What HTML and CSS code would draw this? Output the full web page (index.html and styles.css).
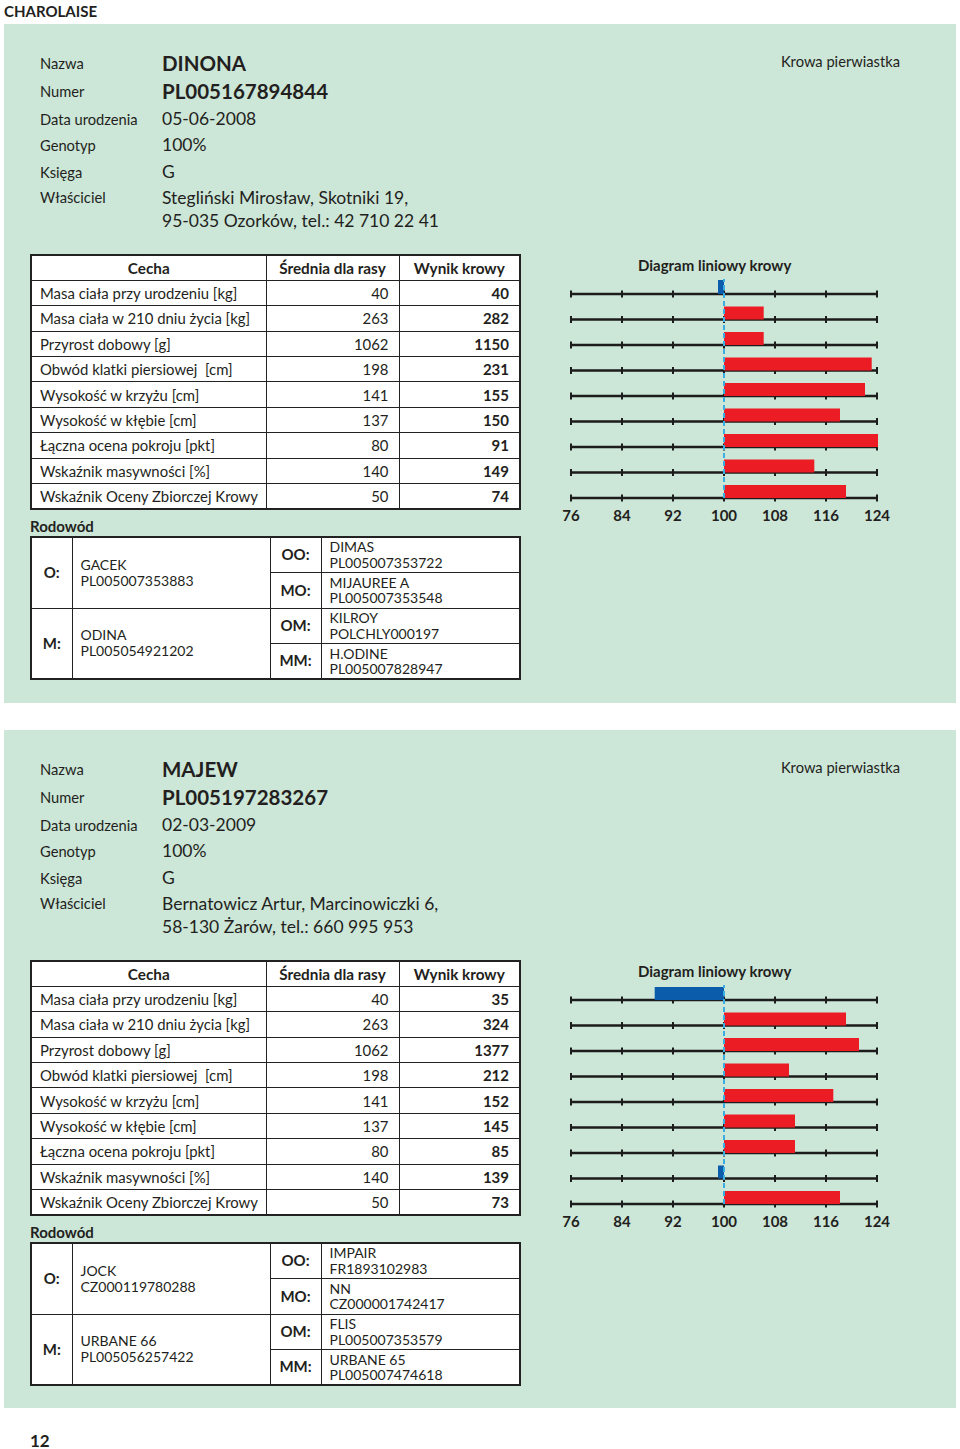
FILE: index.html
```html
<!DOCTYPE html>
<html lang="pl">
<head>
<meta charset="utf-8">
<title>Charolaise</title>
<link rel="stylesheet" href="styles.css">
</head>
<body>
<h1 class="breed">CHAROLAISE</h1>

<section class="panel">
  <div class="top">
    <div class="info">
      <span class="k">Nazwa</span><span class="v big">DINONA</span>
      <span class="k">Numer</span><span class="v big">PL005167894844</span>
      <span class="k">Data urodzenia</span><span class="v">05-06-2008</span>
      <span class="k">Genotyp</span><span class="v">100%</span>
      <span class="k">Księga</span><span class="v">G</span>
      <span class="k owner">Właściciel</span><span class="v owner">Stegliński Mirosław, Skotniki 19,<br>95-035 Ozorków, tel.: 42 710 22 41</span>
    </div>
    <div class="kind">Krowa pierwiastka</div>
  </div>
  <div class="main">
    <div class="left">
      <table class="traits">
        <colgroup><col class="c1"><col class="c2"><col class="c3"></colgroup>
        <tr><th>Cecha</th><th>Średnia dla rasy</th><th>Wynik krowy</th></tr>
        <tr><td>Masa ciała przy urodzeniu [kg]</td><td class="n">40</td><td class="n b">40</td></tr>
        <tr><td>Masa ciała w 210 dniu życia [kg]</td><td class="n">263</td><td class="n b">282</td></tr>
        <tr><td>Przyrost dobowy [g]</td><td class="n">1062</td><td class="n b">1150</td></tr>
        <tr><td>Obwód klatki piersiowej&nbsp; [cm]</td><td class="n">198</td><td class="n b">231</td></tr>
        <tr><td>Wysokość w krzyżu [cm]</td><td class="n">141</td><td class="n b">155</td></tr>
        <tr><td>Wysokość w kłębie [cm]</td><td class="n">137</td><td class="n b">150</td></tr>
        <tr><td>Łączna ocena pokroju [pkt]</td><td class="n">80</td><td class="n b">91</td></tr>
        <tr><td>Wskaźnik masywności [%]</td><td class="n">140</td><td class="n b">149</td></tr>
        <tr><td>Wskaźnik Oceny Zbiorczej Krowy</td><td class="n">50</td><td class="n b">74</td></tr>
      </table>
      <div class="rod-title">Rodowód</div>
      <table class="pedigree">
        <colgroup><col class="p1"><col class="p2"><col class="p3"><col class="p4"></colgroup>
        <tr><th rowspan="2">O:</th><td rowspan="2" class="parent">GACEK<br>PL005007353883</td><th>OO:</th><td>DIMAS<br>PL005007353722</td></tr>
        <tr><th>MO:</th><td>MIJAUREE A<br>PL005007353548</td></tr>
        <tr><th rowspan="2">M:</th><td rowspan="2" class="parent">ODINA<br>PL005054921202</td><th>OM:</th><td>KILROY<br>POLCHLY000197</td></tr>
        <tr><th>MM:</th><td>H.ODINE<br>PL005007828947</td></tr>
      </table>
    </div>
    <div class="chart">
      <div class="chart-title">Diagram liniowy krowy</div>
      <svg class="bars" width="356" height="229" viewBox="0 0 356 229">
        <defs>
          <g id="axis">
            <line x1="25" y1="0" x2="331" y2="0" stroke="#1c1c1c" stroke-width="2.4"/>
            <path d="M25 -3.5V3.5M76 -3.5V3.5M127 -3.5V3.5M178 -3.5V3.5M229 -3.5V3.5M280 -3.5V3.5M331 -3.5V3.5" stroke="#1c1c1c" stroke-width="2"/>
          </g>
        </defs>
        <use href="#axis" y="15"/>
        <use href="#axis" y="40.5"/>
        <use href="#axis" y="66"/>
        <use href="#axis" y="91.5"/>
        <use href="#axis" y="117"/>
        <use href="#axis" y="142.5"/>
        <use href="#axis" y="168"/>
        <use href="#axis" y="193.5"/>
        <use href="#axis" y="219"/>
        <rect class="neg" x="172" y="1" width="6" height="14"/>
        <rect class="pos" x="178" y="27.5" width="39.7" height="13"/>
        <rect class="pos" x="178" y="53" width="39.7" height="13"/>
        <rect class="pos" x="178" y="78.5" width="147.7" height="13"/>
        <rect class="pos" x="178" y="104" width="141" height="13"/>
        <rect class="pos" x="178" y="129.5" width="116" height="13"/>
        <rect class="pos" x="178" y="155" width="154" height="13"/>
        <rect class="pos" x="178" y="180.5" width="90.3" height="13"/>
        <rect class="pos" x="178" y="206" width="122" height="13"/>
        <line x1="178" y1="-2" x2="178" y2="220" stroke="#3aaee3" stroke-width="2" stroke-dasharray="5 3"/>
      </svg>
      <div class="ticks"><span>76</span><span>84</span><span>92</span><span>100</span><span>108</span><span>116</span><span>124</span></div>
    </div>
  </div>
</section>

<section class="panel second">
  <div class="top">
    <div class="info">
      <span class="k">Nazwa</span><span class="v big">MAJEW</span>
      <span class="k">Numer</span><span class="v big">PL005197283267</span>
      <span class="k">Data urodzenia</span><span class="v">02-03-2009</span>
      <span class="k">Genotyp</span><span class="v">100%</span>
      <span class="k">Księga</span><span class="v">G</span>
      <span class="k owner">Właściciel</span><span class="v owner">Bernatowicz Artur, Marcinowiczki 6,<br>58-130 Żarów, tel.: 660 995 953</span>
    </div>
    <div class="kind">Krowa pierwiastka</div>
  </div>
  <div class="main">
    <div class="left">
      <table class="traits">
        <colgroup><col class="c1"><col class="c2"><col class="c3"></colgroup>
        <tr><th>Cecha</th><th>Średnia dla rasy</th><th>Wynik krowy</th></tr>
        <tr><td>Masa ciała przy urodzeniu [kg]</td><td class="n">40</td><td class="n b">35</td></tr>
        <tr><td>Masa ciała w 210 dniu życia [kg]</td><td class="n">263</td><td class="n b">324</td></tr>
        <tr><td>Przyrost dobowy [g]</td><td class="n">1062</td><td class="n b">1377</td></tr>
        <tr><td>Obwód klatki piersiowej&nbsp; [cm]</td><td class="n">198</td><td class="n b">212</td></tr>
        <tr><td>Wysokość w krzyżu [cm]</td><td class="n">141</td><td class="n b">152</td></tr>
        <tr><td>Wysokość w kłębie [cm]</td><td class="n">137</td><td class="n b">145</td></tr>
        <tr><td>Łączna ocena pokroju [pkt]</td><td class="n">80</td><td class="n b">85</td></tr>
        <tr><td>Wskaźnik masywności [%]</td><td class="n">140</td><td class="n b">139</td></tr>
        <tr><td>Wskaźnik Oceny Zbiorczej Krowy</td><td class="n">50</td><td class="n b">73</td></tr>
      </table>
      <div class="rod-title">Rodowód</div>
      <table class="pedigree">
        <colgroup><col class="p1"><col class="p2"><col class="p3"><col class="p4"></colgroup>
        <tr><th rowspan="2">O:</th><td rowspan="2" class="parent">JOCK<br>CZ000119780288</td><th>OO:</th><td>IMPAIR<br>FR1893102983</td></tr>
        <tr><th>MO:</th><td>NN<br>CZ000001742417</td></tr>
        <tr><th rowspan="2">M:</th><td rowspan="2" class="parent">URBANE 66<br>PL005056257422</td><th>OM:</th><td>FLIS<br>PL005007353579</td></tr>
        <tr><th>MM:</th><td>URBANE 65<br>PL005007474618</td></tr>
      </table>
    </div>
    <div class="chart">
      <div class="chart-title">Diagram liniowy krowy</div>
      <svg class="bars" width="356" height="229" viewBox="0 0 356 229">
        <use href="#axis" y="15"/>
        <use href="#axis" y="40.5"/>
        <use href="#axis" y="66"/>
        <use href="#axis" y="91.5"/>
        <use href="#axis" y="117"/>
        <use href="#axis" y="142.5"/>
        <use href="#axis" y="168"/>
        <use href="#axis" y="193.5"/>
        <use href="#axis" y="219"/>
        <rect class="neg" x="108.7" y="2" width="69.3" height="13"/>
        <rect class="pos" x="178" y="27.5" width="122" height="13"/>
        <rect class="pos" x="178" y="53" width="135" height="13"/>
        <rect class="pos" x="178" y="78.5" width="65" height="13"/>
        <rect class="pos" x="178" y="104" width="109.3" height="13"/>
        <rect class="pos" x="178" y="129.5" width="71" height="13"/>
        <rect class="pos" x="178" y="155" width="71" height="13"/>
        <rect class="neg" x="172" y="180.5" width="6" height="13"/>
        <rect class="pos" x="178" y="206" width="116" height="13"/>
        <line x1="178" y1="-2" x2="178" y2="220" stroke="#3aaee3" stroke-width="2" stroke-dasharray="5 3"/>
      </svg>
      <div class="ticks"><span>76</span><span>84</span><span>92</span><span>100</span><span>108</span><span>116</span><span>124</span></div>
    </div>
  </div>
</section>

<footer class="page-no">12</footer>
</body>
</html>
```

FILE: styles.css
```css
* { box-sizing: border-box; }

html, body {
  margin: 0;
  padding: 0;
  background: #ffffff;
}

body {
  font-family: Lato, "Liberation Sans", sans-serif;
  color: #231f20;
  width: 960px;
  height: 1449px;
  overflow: hidden;
}

.breed {
  margin: 0;
  padding: 2px 0 0 4px;
  height: 24px;
  font-size: 15px;
  line-height: 18px;
  font-weight: 700;
}

.panel {
  margin-left: 4px;
  width: 952px;
  height: 679px;
  background: #cce6d8;
  padding: 25px 0 0 26px;
}

.panel.second {
  margin-top: 27px;
  height: 678px;
}

.top {
  display: flex;
  justify-content: space-between;
  height: 185px;
}

.info {
  margin-left: 10px;
  display: grid;
  grid-template-columns: 122px auto;
  grid-template-rows: 28px 28px 27px 26px 27px auto;
  align-items: center;
  align-content: start;
}

.info .k {
  font-size: 14.7px;
  line-height: 20px;
}

.info .v {
  font-size: 17.5px;
  line-height: 22px;
}

.info .v.big {
  font-size: 20.5px;
  font-weight: 700;
  line-height: 24px;
}

.info .owner {
  align-self: start;
  line-height: 23px;
  margin-top: 1px;
}

.kind {
  font-size: 14.7px;
  line-height: 20px;
  padding: 2px 56px 0 0;
}

.main {
  display: flex;
  padding-top: 20px;
}

.left {
  width: 489px;
}

.traits {
  border-collapse: collapse;
  width: 489px;
  border: 2px solid #222;
  background: #ffffff;
  table-layout: fixed;
}

.traits .c1 { width: 235px; }
.traits .c2 { width: 133px; }
.traits .c3 { width: 121px; }

.traits th,
.traits td {
  border: 1px solid #222;
  height: 25.4px;
  padding: 0 10px 0 8px;
  font-size: 14.9px;
  line-height: 16px;
  white-space: nowrap;
}

.traits th {
  font-weight: 700;
  font-size: 15.3px;
  text-align: center;
  padding: 0;
}

.traits td.n { text-align: right; }
.traits td.b { font-weight: 700; font-size: 15px; }

.rod-title {
  font-size: 15px;
  font-weight: 700;
  line-height: 20px;
  margin-top: 6px;
}

.pedigree {
  border-collapse: collapse;
  width: 489px;
  border: 2px solid #222;
  background: #ffffff;
  table-layout: fixed;
}

.pedigree .p1 { width: 41px; }
.pedigree .p2 { width: 198px; }
.pedigree .p3 { width: 51px; }
.pedigree .p4 { width: 199px; }

.pedigree th,
.pedigree td {
  border: 1px solid #222;
  height: 35.6px;
  font-size: 14px;
  line-height: 15.5px;
  white-space: nowrap;
  vertical-align: middle;
}

.pedigree th {
  font-weight: 700;
  font-size: 15px;
  text-align: center;
  padding: 0;
}

.pedigree td {
  padding: 0 0 0 8px;
}

.pedigree td.parent {
  line-height: 16px;
}

.chart {
  margin-left: 27px;
  width: 356px;
}

.chart-title {
  height: 25.4px;
  line-height: 22px;
  font-size: 15px;
  font-weight: 700;
  padding-left: 92px;
}

.bars {
  display: block;
}

.bars .pos { fill: #ec1c24; }
.bars .neg { fill: #0b5cab; }

.ticks {
  display: flex;
  justify-content: space-between;
  margin-top: -1px;
}

.ticks span {
  width: 50px;
  text-align: center;
  font-size: 15px;
  font-weight: 700;
  line-height: 16px;
}

.page-no {
  padding: 23px 0 0 30px;
  font-size: 17px;
  font-weight: 700;
  line-height: 20px;
}
```
